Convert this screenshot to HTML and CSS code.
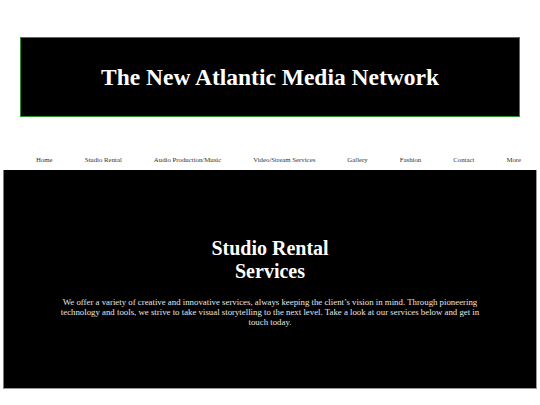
FILE: index.html
```html
<!DOCTYPE html>
<html lang="en">
<head>
<meta charset="utf-8">
<title>The New Atlantic Media Network</title>
<link rel="stylesheet" href="styles.css">
</head>
<body>
<header class="banner">
  <h1 class="banner-title">The New Atlantic Media Network</h1>
</header>
<nav class="nav">
  <a class="nav-item" href="#">Home</a>
  <a class="nav-item" href="#">Studio Rental</a>
  <a class="nav-item" href="#">Audio Production/Music</a>
  <a class="nav-item" href="#">Video/Stream Services</a>
  <a class="nav-item" href="#">Gallery</a>
  <a class="nav-item" href="#">Fashion</a>
  <a class="nav-item" href="#">Contact</a>
  <a class="nav-item" href="#">More</a>
</nav>
<section class="hero">
  <h2 class="hero-title">Studio Rental Services</h2>
  <p class="hero-text">We offer a variety of creative and innovative services, always keeping the client’s vision in mind. Through pioneering technology and tools, we strive to take visual storytelling to the next level. Take a look at our services below and get in touch today.</p>
</section>
</body>
</html>
```

FILE: styles.css
```css
html, body {
  margin: 0;
  padding: 0;
  background: #ffffff;
  font-family: "Liberation Serif", "Times New Roman", serif;
}

.banner {
  margin: 37px 20px 0 20px;
  height: 78px;
  border: 1px solid #2f8f2f;
  background: #000000;
  display: flex;
  align-items: center;
  justify-content: center;
}

.banner-title {
  margin: 0;
  color: #ffffff;
  font-size: 23.5px;
  font-weight: bold;
  line-height: 28px;
}

.nav {
  display: flex;
  margin: 38px 0 0 20px;
  height: 10px;
}

.nav-item {
  padding: 0 16px;
  font-size: 6.8px;
  line-height: 10px;
  color: #333333;
  text-decoration: none;
  white-space: nowrap;
}

.hero {
  margin: 5px 3px 0 3px;
  height: 219px;
  box-sizing: border-box;
  background: #000000;
  border-left: 1px solid #7a7a7a;
  border-right: 1px solid #9a9a9a;
  border-bottom: 1px solid #9a9a9a;
  padding-top: 67px;
  text-align: center;
}

.hero-title {
  margin: 0 auto;
  max-width: 160px;
  color: #ffffff;
  font-size: 20px;
  font-weight: bold;
  line-height: 23px;
}

.hero-text {
  margin: 14px auto 0 auto;
  width: 424px;
  color: #e6e6e6;
  font-size: 8.8px;
  line-height: 10px;
}
```
